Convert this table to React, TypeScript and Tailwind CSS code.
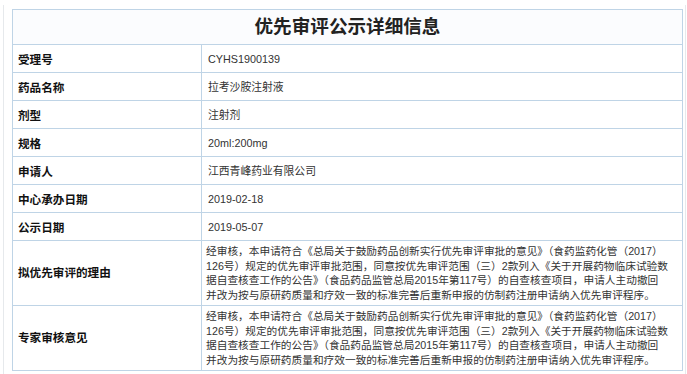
import React from 'react';

const rows: { label: string; value: string }[] = [
  { label: '受理号', value: 'CYHS1900139' },
  { label: '药品名称', value: '拉考沙胺注射液' },
  { label: '剂型', value: '注射剂' },
  { label: '规格', value: '20ml:200mg' },
  { label: '申请人', value: '江西青峰药业有限公司' },
  { label: '中心承办日期', value: '2019-02-18' },
  { label: '公示日期', value: '2019-05-07' },
];

// same opinion text in both long rows, broken as in the original page
const lines = [
  '经审核，本申请符合《总局关于鼓励药品创新实行优先审评审批的意见》（食药监药化管（2017）',
  '126号）规定的优先审评审批范围，同意按优先审评范围（三）2款列入《关于开展药物临床试验数',
  '据自查核查工作的公告》（食品药品监管总局2015年第117号）的自查核查项目，申请人主动撤回',
  '并改为按与原研药质量和疗效一致的标准完善后重新申报的仿制药注册申请纳入优先审评程序。',
];

function LongText() {
  return (
    <div className="text-[10.7px] leading-[14.5px] text-[#333]">
      {lines.map((l) => (
        <div key={l} className="whitespace-nowrap">{l}</div>
      ))}
    </div>
  );
}

export default function App() {
  return (
    <div
      className="w-[687px] h-[374px] bg-white overflow-hidden relative"
      style={{ fontFamily: '"Liberation Sans", Arial, "Noto Sans CJK SC", sans-serif' }}
    >
      {/* faint page frame lines */}
      <div className="absolute left-[3px] top-[5px] bottom-0 w-px bg-[#e6e9ec]" />
      <div className="absolute left-[685px] top-[5px] bottom-0 w-px bg-[#e6e9ec]" />

      <div className="pt-[9px] pl-[12px]">
        <table className="w-[671px] border-collapse table-fixed">
          <colgroup>
            <col className="w-[189px]" />
            <col />
          </colgroup>
          <tbody>
            <tr className="h-[35px] bg-[#fbfcfe]">
              <td
                colSpan={2}
                className="border border-[#bfd4e6] text-center text-[18.6px] font-bold text-[#222]"
              >
                优先审评公示详细信息
              </td>
            </tr>
            {rows.map((r) => (
              <tr key={r.label} className="h-[28px]">
                <td className="border border-[#bfd4e6] pl-[5px] pt-[2px] text-[11.6px] font-bold text-[#111]">
                  {r.label}
                </td>
                <td className="border border-[#bfd4e6] pl-[6px] pt-[2px] text-[10.8px] text-[#333]">
                  {r.value}
                </td>
              </tr>
            ))}
            {['拟优先审评的理由', '专家审核意见'].map((label) => (
              <tr key={label} className="h-[64px]">
                <td className="border border-[#bfd4e6] pl-[5px] text-[11.6px] font-bold text-[#111]">
                  {label}
                </td>
                <td className="border border-[#bfd4e6] pl-[4px] py-[3px]">
                  <LongText />
                </td>
              </tr>
            ))}
          </tbody>
        </table>
      </div>
    </div>
  );
}
